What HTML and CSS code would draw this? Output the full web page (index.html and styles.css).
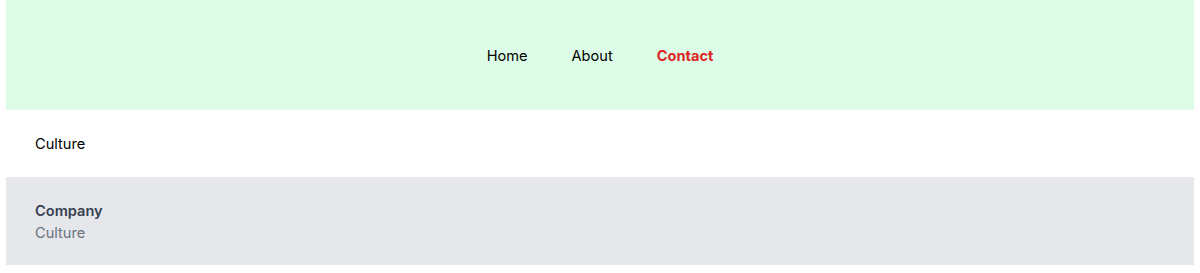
FILE: index.html
```html
<!DOCTYPE html>
<html lang="en">
<head>
<meta charset="utf-8">
<title>Culture</title>
<link rel="stylesheet" href="styles.css">
</head>
<body>
<header class="site-header">
  <nav class="nav">
    <a class="nav-link" href="#">Home</a>
    <a class="nav-link" href="#">About</a>
    <a class="nav-link nav-link--active" href="#">Contact</a>
  </nav>
</header>
<main class="content">
  <p class="content-text">Culture</p>
</main>
<footer class="site-footer">
  <div class="footer-title">Company</div>
  <div class="footer-sub">Culture</div>
</footer>
</body>
</html>
```

FILE: styles.css
```css
* { box-sizing: border-box; }
html, body { margin: 0; }
body {
  padding: 0 6px 8px;
  font-family: Inter, "Noto Sans", "Liberation Sans", sans-serif;
  font-size: 14.6px;
  color: #000;
  background: #fff;
}
.site-header {
  height: 110px;
  background: #dcfce7;
  display: flex;
  align-items: center;
  justify-content: center;
  padding-top: 1px;
}
.nav {
  display: flex;
  gap: 44px;
}
.nav-link {
  color: #000;
  text-decoration: none;
  line-height: 20px;
}
.nav-link--active {
  color: #dc2626;
  font-weight: 700;
}
.content {
  padding: 25px 29px 23px;
}
.content-text {
  margin: 0;
  line-height: 19px;
}
.site-footer {
  background: #e5e7eb;
  padding: 23px 29px 21px;
}
.footer-title {
  font-weight: 600;
  color: #374151;
  line-height: 22px;
}
.footer-sub {
  color: #6b7280;
  line-height: 22px;
}
```
